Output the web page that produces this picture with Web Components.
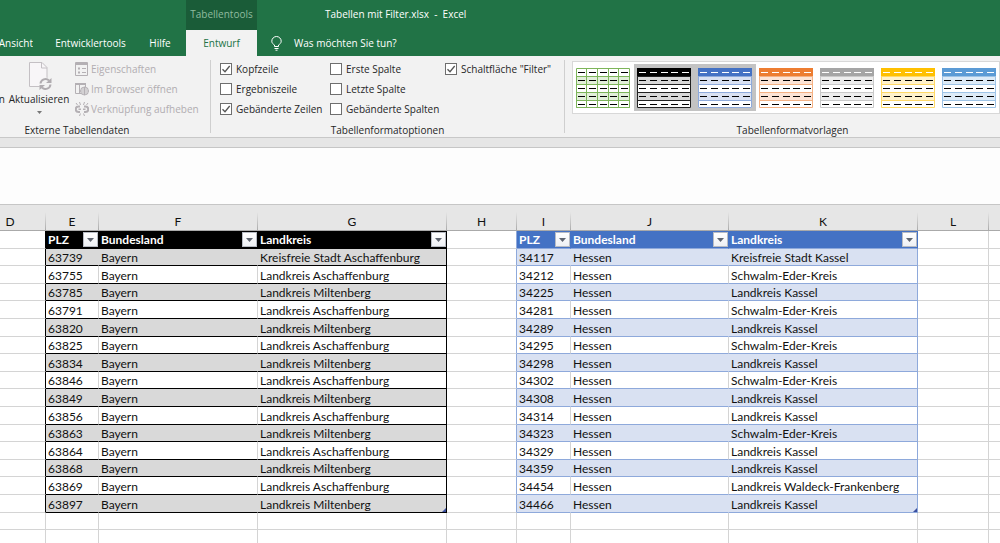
<!DOCTYPE html>
<html lang="de">
<head>
<meta charset="utf-8">
<title>Tabellen mit Filter.xlsx - Excel</title>
<style>
  html, body { height: 100%; margin: 0; }
  body { font-family: "Open Sans", "Noto Sans", sans-serif; font-size: 10px; color: #262626; overflow: hidden; }
</style>
</head>
<body>
<excel-window></excel-window>

<template id="t-window">
  <style>
    :host { display: flex; flex-direction: column; height: 100%; background: #fff; }
    .ribbon { display: flex; background: #f2f2f2; border-bottom: 1px solid #c8c8c8; padding: 4px 0; }
    .strip { height: 9px; background: #e6e6e6; border-bottom: 1px solid #c6c6c6; flex: none; }
    .blank { height: 56px; background: #fdfdfd; flex: none; }
    sheet-grid { flex: 1; min-height: 0; }
    .external { display: grid; grid-template-columns: 5px 68px 1fr; width: 210px; box-sizing: border-box; }
    .cut { display: flex; justify-content: flex-end; overflow: hidden; padding-top: 31px; line-height: 16px; }
    .refresh { display: flex; flex-direction: column; align-items: center; align-self: start; border: 0; padding: 0; background: none; font: inherit; color: inherit; line-height: 16px; }
    .refresh svg { display: block; }
    .refresh span { margin-top: 1px; white-space: nowrap; }
    .refresh .arrow { margin-top: 4px; }
    .list { display: flex; flex-direction: column; }
    .options { display: grid; grid-template-columns: 110px 115px 1fr; padding-left: 9px; width: 353px; box-sizing: border-box; }
  </style>
  <title-bar></title-bar>
  <tab-bar></tab-bar>
  <section class="ribbon">
    <ribbon-group caption="Externe Tabellendaten" class="first">
      <div class="external">
        <div class="cut">n</div>
        <button class="refresh">
          <svg width="26" height="30" viewBox="0 0 26 30" fill="none">
            <path d="M3.500 2.500h12.500l5 5v19h-17.500z" fill="#f8f6f8" stroke="#c4c0c4"/>
            <path d="M15.500 2.500v5.500h5.500" stroke="#c4c0c4"/>
            <circle cx="19.500" cy="24" r="6.500" fill="#f2f2f2"/>
            <path d="M14.500 23.500a5 5 0 0 1 8.500-3M24.500 24.500a5 5 0 0 1-8.500 3" stroke="#b0acb0" stroke-width="2"/>
            <path d="M25.500 18v5h-5.500zM13.500 30v-5h5.500z" fill="#b0acb0"/>
          </svg>
          <span>Aktualisieren</span>
          <svg class="arrow" width="5" height="3" viewBox="0 0 5 3"><path d="M0 0h5l-2.500 3z" fill="#777"/></svg>
        </button>
        <div class="list">
          <ribbon-command>
            <svg slot="icon" width="14" height="14" viewBox="0 0 14 14" fill="none" stroke="#b4b0b4"><path d="M.5.500h12v13h-12z"/><path d="M1 2h11.500" stroke-width="2"/><path d="M3 6.500h2M3 10.500h2" stroke-width="2"/><path d="M7 6.500h4M7 10.500h4"/></svg>
            Eigenschaften</ribbon-command>
          <ribbon-command>
            <svg slot="icon" width="14" height="14" viewBox="0 0 14 14" fill="none" stroke="#b4b0b4"><path d="M6 11.500H.5V1.500h10V5M4.500 3v8"/><path d="M0 2h11" stroke-width="2"/><circle cx="9.500" cy="9" r="4" fill="#f2f2f2"/><path d="M5.500 9h8M6.500 7h6M6.500 11h6M9.500 5v8"/></svg>
            Im Browser öffnen</ribbon-command>
          <ribbon-command>
            <svg slot="icon" width="14" height="14" viewBox="0 0 14 14" fill="none" stroke="#b4b0b4"><path d="M5 4.500H3.500a2.700 2.700 0 0 0 0 5.500H5M9 4.500h1.500a2.700 2.700 0 0 1 0 5.500H9" stroke-width="2"/><path d="M3.500 7.200h2.500M8 7.200h2.500" stroke-width="1.500"/><path d="M5.500 3 4.500 0M8.500 3 9.500 0M5.500 11.500 4.500 14M8.500 11.500 9.500 14M2.500 3 1 1M11.500 3 13 1"/></svg>
            Verknüpfung aufheben</ribbon-command>
        </div>
      </div>
    </ribbon-group>
    <ribbon-group caption="Tabellenformatoptionen">
      <div class="options">
        <check-option checked>Kopfzeile</check-option>
        <check-option>Erste Spalte</check-option>
        <check-option checked>Schaltfläche "Filter"</check-option>
        <check-option>Ergebniszeile</check-option>
        <check-option>Letzte Spalte</check-option>
        <span></span>
        <check-option checked>Gebänderte Zeilen</check-option>
        <check-option>Gebänderte Spalten</check-option>
      </div>
    </ribbon-group>
    <ribbon-group caption="Tabellenformatvorlagen" class="last">
      <style-gallery></style-gallery>
    </ribbon-group>
  </section>
  <div class="strip"></div>
  <div class="blank"></div>
  <sheet-grid></sheet-grid>
</template>

<template id="t-title">
  <style>
    :host { display: flex; height: 30px; flex: none; background: #217346; color: #fff; line-height: 28px; }
    .context { margin-left: 186px; width: 71px; text-align: center; background: #1a5c38; color: #8fbb9f; }
    .name { margin-left: 68px; white-space: pre; }
  </style>
  <div class="context">Tabellentools</div>
  <div class="name">Tabellen mit Filter.xlsx  -  Excel</div>
</template>

<template id="t-tabs">
  <style>
    :host { display: flex; height: 26px; flex: none; background: #217346; line-height: 26px; }
    a { color: #fff; text-decoration: none; text-align: center; white-space: nowrap; }
    .view { width: 33px; display: flex; justify-content: flex-end; overflow: hidden; }
    .dev { width: 115px; }
    .help { width: 24px; flex: none; }
    .design { margin-left: 14px; width: 71px; background: #f2f2f2; color: #217346; }
    svg { margin: 6px 12px 0 14px; flex: none; }
  </style>
  <a href="#" class="view">Ansicht</a>
  <a href="#" class="dev">Entwicklertools</a>
  <a href="#" class="help">Hilfe</a>
  <a href="#" class="design">Entwurf</a>
  <svg width="11" height="15" viewBox="0 0 11 15" fill="none" stroke="#fff"><path d="M3.500 10.500V9C2 8 .8 7 .8 5.200a4.700 4.700 0 0 1 9.400 0C10.200 7 9 8 7.500 9v1.500zM3.500 12.500h4M4.500 14.200h2"/></svg>
  <a href="#">Was möchten Sie tun?</a>
</template>

<template id="t-group">
  <style>
    :host { display: flex; flex-direction: column; border-right: 1px solid #cfcfcf; height: 73px; flex: none; }
    :host(.last) { flex: 1; min-width: 0; border: 0; }
    .body { height: 62px; flex: none; }
    .caption { text-align: center; line-height: 16px; white-space: nowrap; }
    :host(.first) .caption { padding-right: 56px; }
    :host(.last) .caption { padding-left: 20px; }
  </style>
  <div class="body"><slot></slot></div>
  <div class="caption"></div>
</template>

<template id="t-command">
  <style>
    :host { display: block; height: 20px; }
    button { display: flex; align-items: center; gap: 2px; height: 18px; border: 0; padding: 0 0 0 2px; background: none; font: inherit; color: #b1adb1; white-space: nowrap; }
    ::slotted(svg) { display: block; }
  </style>
  <button disabled><slot name="icon"></slot><span><slot></slot></span></button>
</template>

<template id="t-check">
  <style>
    :host { display: block; height: 20px; }
    label { display: flex; align-items: center; gap: 4px; height: 18px; white-space: nowrap; }
    input { appearance: none; width: 12px; height: 12px; margin: 0; border: 1px solid #6e6e6e; background: #fff; flex: none; }
    input:checked { background: #fff url('data:image/svg+xml,<svg xmlns="http://www.w3.org/2000/svg" width="10" height="10"><path d="M1.500 5.200 4 7.700 8.700 2" fill="none" stroke="%23555" stroke-width="1.300"/></svg>') center no-repeat; }
  </style>
  <label><input type="checkbox"><span><slot></slot></span></label>
</template>

<template id="t-gallery">
  <style>
    :host { display: flex; margin: 1px 0 0 7px; height: 51px; border: 1px solid #d8d8d8; background: #fff; overflow: hidden; }
    button { width: 61px; flex: none; border: 0; padding: 0 0 0 3px; margin: 2px 0; display: flex; align-items: center; background: none; }
    button.on { background: #c3c3c3; }
    svg { display: block; }
  </style>
</template>

<template id="t-sheet">
  <style>
    :host { display: block; overflow: hidden; border-top: 1px solid #c6c6c6; }
    table { border-collapse: separate; border-spacing: 0; table-layout: fixed; width: 100%; font: 12px "Lato", "Open Sans", sans-serif; color: #111; }
    th, td { padding: 0 0 0 2px; box-sizing: border-box; text-align: left; white-space: nowrap; border-right: 1px solid #d4d4d4; border-bottom: 1px solid #d4d4d4; line-height: 16px; }
    td { padding: 2px 0 0 2px; line-height: 14px; }
    thead th { height: 26px; padding: 8px 0 0; text-align: center; font-weight: 400; background: #e6e6e6; border-style: solid; border-width: 0 1px 1px 0; border-image: linear-gradient(#e6e6e6 30%, #a8a8a8) 1; }
    thead th:first-child { padding-right: 25px; }
    tr > :last-child { border-right-width: 0; }
    tbody tr { height: 18px; }
    tbody tr:nth-child(5n+2), tbody tr:nth-child(5n+4) { height: 17px; }
    .black { border-bottom-color: #000; }
    .black.end, .edge-black { border-right-color: #000; }
    .blue { border-bottom-color: #8ea9db; }
    .blue.end, .edge-blue { border-right-color: #8ea9db; }
    .black.band { background: #d9d9d9; }
    .blue.band { background: #d9e1f2; }
    .band:not(.end) { border-right-color: transparent; }
    .head { font-weight: 700; color: #fff; }
    .head.black { background: #000; border-right-color: #000; }
    .head.blue { background: #4472c4; border-right-color: #4472c4; }
    .head div { display: flex; justify-content: space-between; align-items: center; }
    button { width: 15px; height: 15px; flex: none; padding: 0; border: 1px solid #b8bcc4; background: linear-gradient(#fff, #eef0f4); display: grid; place-items: center; }
    .corner { position: relative; }
    .corner::after { content: ""; position: absolute; right: 0; bottom: 0; width: 4px; height: 4px; background: #3b4fa0; clip-path: polygon(100% 0, 100% 100%, 0 100%); }
  </style>
  <table>
    <colgroup><col style="width:46px"><col style="width:53px"><col style="width:159px"><col style="width:189px"><col style="width:70px"><col style="width:54px"><col style="width:158px"><col style="width:189px"><col style="width:71px"><col></colgroup>
    <thead><tr></tr></thead>
    <tbody></tbody>
  </table>
</template>

<script>
  class Base extends HTMLElement {
    constructor() {
      super();
      this.attachShadow({ mode: "open" }).append(document.getElementById(this.constructor.tpl).content.cloneNode(true));
    }
    $(s) { return this.shadowRoot.querySelector(s); }
  }

  customElements.define("title-bar", class extends Base { static tpl = "t-title"; });
  customElements.define("tab-bar", class extends Base { static tpl = "t-tabs"; });
  customElements.define("ribbon-command", class extends Base { static tpl = "t-command"; });
  customElements.define("ribbon-group", class extends Base {
    static tpl = "t-group";
    connectedCallback() { this.$(".caption").textContent = this.getAttribute("caption"); }
  });
  customElements.define("check-option", class extends Base {
    static tpl = "t-check";
    connectedCallback() { this.$("input").checked = this.hasAttribute("checked"); }
  });

  customElements.define("style-gallery", class extends Base {
    static tpl = "t-gallery";
    connectedCallback() {
      // [name, header fill, band fill, line colour, header dash, selected, vertical lines]
      const styles = [
        ["Grün", "#fff", "#e2efda", "#7db55a", "#000", false, true],
        ["Schwarz", "#000", "#d9d9d9", "#222", "#fff", true],
        ["Blau", "#4472c4", "#d9e1f2", "#8eaadb", "#fff", true],
        ["Orange", "#ed7d31", "#fce4d6", "#f4b183", "#fff"],
        ["Grau", "#a5a5a5", "#ededed", "#c9c9c9", "#fff"],
        ["Gold", "#ffc000", "#fff2cc", "#ffd966", "#fff"],
        ["Hellblau", "#5b9bd5", "#ddebf7", "#9dc3e6", "#fff"],
      ];
      for (const [name, head, band, line, dash, on, grid] of styles) {
        let s = `<rect width="54" height="40" fill="#fff"/><rect width="54" height="8" fill="${head}"/>`;
        s += `<rect y="8" width="54" height="8" fill="${band}"/><rect y="24" width="54" height="8" fill="${band}"/>`;
        s += `<path d="M0 8.500h54M0 16.500h54M0 24.500h54M0 32.500h54M.5 8v31.500h53V8" fill="none" stroke="${line}"/>`;
        if (grid) s += `<path d="M.5.500h53v39H.5zM10.500 0v40M21.500 0v40M32.500 0v40M42.500 0v40" fill="none" stroke="${line}"/>`;
        for (let r = 0; r < 5; r++)
          for (let c = 0; c < 5; c++)
            s += `<path d="M${Math.round(2.4 + c * 10.6)} ${4.5 + r * 8}h7" stroke="${r ? "#000" : dash}"/>`;
        const b = document.createElement("button");
        b.ariaLabel = name;
        if (on) b.className = "on";
        b.innerHTML = `<svg width="54" height="40" viewBox="0 0 54 40">${s}</svg>`;
        this.shadowRoot.append(b);
      }
    }
  });

  customElements.define("sheet-grid", class extends Base {
    static tpl = "t-sheet";
    connectedCallback() {
      this.$("thead tr").innerHTML = ["D", "E", "F", "G", "H", "I", "J", "K", "L", ""].map(c => `<th scope="col">${c}</th>`).join("");
      const A = "Landkreis Aschaffenburg", M = "Landkreis Miltenberg", K = "Landkreis Kassel", S = "Schwalm-Eder-Kreis";
      const left = [[63739, "Kreisfreie Stadt Aschaffenburg"], [63755, A], [63785, M], [63791, A], [63820, M], [63825, A], [63834, M], [63846, A], [63849, M], [63856, A], [63863, M], [63864, A], [63868, M], [63869, A], [63897, M]];
      const right = [[34117, "Kreisfreie Stadt Kassel"], [34212, S], [34225, K], [34281, S], [34289, K], [34295, S], [34298, K], [34302, S], [34308, K], [34314, K], [34323, S], [34329, K], [34359, K], [34454, "Landkreis Waldeck-Frankenberg"], [34466, K]];
      const arrow = `<svg width="7" height="4" viewBox="0 0 7 4" style="display:block"><path d="M0 0h7L3.500 4z" fill="#5f6570"/></svg>`;
      const head = k => ["PLZ", "Bundesland", "Landkreis"].map((t, i) => `<th scope="col" class="head ${k}${i == 2 ? " end" : ""}"><div>${t}<button aria-label="Filter ${t}">${arrow}</button></div></th>`).join("");
      const body = (k, r, land, i) => [r[0], land, r[1]].map((t, c) =>
        `<td class="${k}${i % 2 ? "" : " band"}${c == 2 ? " end" + (i == 14 ? " corner" : "") : ""}">${t}</td>`).join("");
      let h = `<tr><td class="edge-black"></td>${head("black")}<td class="edge-blue"></td>${head("blue")}<td></td><td></td></tr>`;
      left.forEach((r, i) => h += `<tr><td class="edge-black"></td>${body("black", r, "Bayern", i)}<td class="edge-blue"></td>${body("blue", right[i], "Hessen", i)}<td></td><td></td></tr>`);
      for (let i = 0; i < 2; i++) h += `<tr>${"<td></td>".repeat(10)}</tr>`;
      this.$("tbody").innerHTML = h;
    }
  });

  customElements.define("excel-window", class extends Base { static tpl = "t-window"; });
</script>
</body>
</html>
